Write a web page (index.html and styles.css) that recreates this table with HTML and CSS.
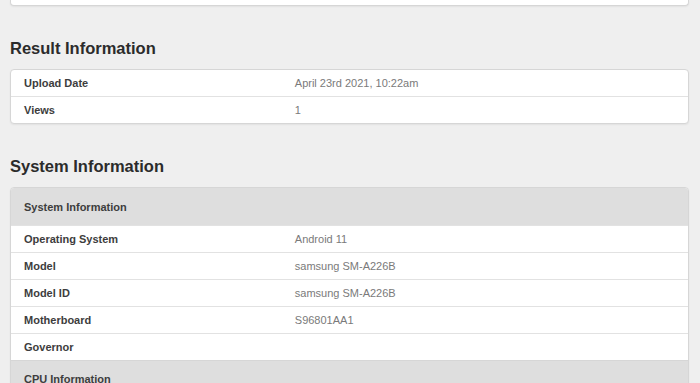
FILE: index.html
```html
<!DOCTYPE html>
<html lang="en">
<head>
    <meta charset="UTF-8">
    <meta name="viewport" content="width=device-width, initial-scale=1.0">
    <title>Benchmark Result</title>
    <link rel="stylesheet" href="styles.css">
</head>
<body>
    <div class="page">
        <div class="card card-top"></div>

        <h2>Result Information</h2>
        <div class="card">
            <div class="row">
                <div class="name">Upload Date</div>
                <div class="value">April 23rd 2021, 10:22am</div>
            </div>
            <div class="row">
                <div class="name">Views</div>
                <div class="value">1</div>
            </div>
        </div>

        <h2>System Information</h2>
        <div class="card">
            <div class="row heading">
                <div class="name">System Information</div>
            </div>
            <div class="row">
                <div class="name">Operating System</div>
                <div class="value">Android 11</div>
            </div>
            <div class="row">
                <div class="name">Model</div>
                <div class="value">samsung SM-A226B</div>
            </div>
            <div class="row">
                <div class="name">Model ID</div>
                <div class="value">samsung SM-A226B</div>
            </div>
            <div class="row">
                <div class="name">Motherboard</div>
                <div class="value">S96801AA1</div>
            </div>
            <div class="row">
                <div class="name">Governor</div>
                <div class="value"></div>
            </div>
            <div class="row heading">
                <div class="name">CPU Information</div>
            </div>
        </div>
    </div>
</body>
</html>
```

FILE: styles.css
```css
body {
    font-family: "Liberation Sans", Arial, sans-serif;
    background-color: #efefef;
    color: #333;
    margin: 0;
}
.page {
    padding: 0 11px 0 10px;
}
h2 {
    font-size: 16.5px;
    font-weight: bold;
    color: #2b2b2b;
    margin: 32px 0 11px 0;
    line-height: 20px;
}
.card {
    background-color: #fff;
    border: 1px solid #d6d6d6;
    border-radius: 4px;
    box-shadow: 0 1px 2px rgba(0,0,0,0.06);
    overflow: hidden;
}
.card-top {
    height: 5px;
    border-top: none;
    border-radius: 0 0 4px 4px;
}
.row {
    display: flex;
    align-items: center;
    height: 26px;
    border-top: 1px solid #e2e2e2;
    font-size: 11px;
}
.row:first-child {
    border-top: none;
}
.name {
    width: 40%;
    padding-left: 13px;
    font-weight: bold;
    color: #3d3d3d;
}
.value {
    color: #7a7a7a;
}
.row.heading {
    height: 36px;
    background-color: #dedede;
    border-top-color: #d6d6d6;
}
.card .row.heading:first-child {
    height: 37px;
}
```
